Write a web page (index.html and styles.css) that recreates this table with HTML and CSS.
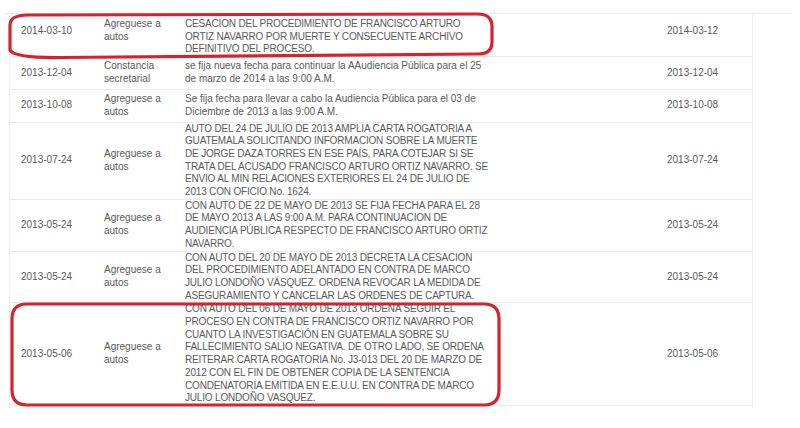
FILE: index.html
```html
<!DOCTYPE html>
<html>
<head>
    <title>Actuaciones</title>
    <link rel="stylesheet" href="styles.css">
</head>
<body>
    <div class="panel">
        <table class="actuaciones">
            <colgroup>
                <col class="c-fecha">
                <col class="c-tipo">
                <col class="c-desc">
                <col class="c-vacia">
                <col class="c-reg">
            </colgroup>
            <tbody>
                <tr class="first">
                    <td class="fecha">2014-03-10</td>
                    <td class="tipo">Agreguese a autos</td>
                    <td class="desc mayus">CESACION DEL PROCEDIMIENTO DE FRANCISCO ARTURO<br>ORTIZ NAVARRO POR MUERTE Y CONSECUENTE ARCHIVO<br>DEFINITIVO DEL PROCESO.</td>
                    <td></td>
                    <td class="reg">2014-03-12</td>
                </tr>
                <tr>
                    <td class="fecha">2013-12-04</td>
                    <td class="tipo">Constancia secretarial</td>
                    <td class="desc">se fija nueva fecha para continuar la AAudiencia Pública para el 25<br>de marzo de 2014 a las 9:00 A.M.</td>
                    <td></td>
                    <td class="reg">2013-12-04</td>
                </tr>
                <tr>
                    <td class="fecha">2013-10-08</td>
                    <td class="tipo">Agreguese a autos</td>
                    <td class="desc">Se fija fecha para llevar a cabo la Audiencia Pública para el 03 de<br>Diciembre de 2013 a las 9:00 A.M.</td>
                    <td></td>
                    <td class="reg">2013-10-08</td>
                </tr>
                <tr>
                    <td class="fecha">2013-07-24</td>
                    <td class="tipo">Agreguese a autos</td>
                    <td class="desc mayus">AUTO DEL 24 DE JULIO DE 2013 AMPLIA CARTA ROGATORIA A<br>GUATEMALA SOLICITANDO INFORMACION SOBRE LA MUERTE<br>DE JORGE DAZA TORRES EN ESE PAÍS, PARA COTEJAR SI SE<br>TRATA DEL ACUSADO FRANCISCO ARTURO ORTIZ NAVARRO. SE<br>ENVIO AL MIN RELACIONES EXTERIORES EL 24 DE JULIO DE<br>2013 CON OFICIO No. 1624.</td>
                    <td></td>
                    <td class="reg">2013-07-24</td>
                </tr>
                <tr>
                    <td class="fecha">2013-05-24</td>
                    <td class="tipo">Agreguese a autos</td>
                    <td class="desc mayus">CON AUTO DE 22 DE MAYO DE 2013 SE FIJA FECHA PARA EL 28<br>DE MAYO 2013 A LAS 9:00 A.M. PARA CONTINUACION DE<br>AUDIENCIA PÚBLICA RESPECTO DE FRANCISCO ARTURO ORTIZ<br>NAVARRO.</td>
                    <td></td>
                    <td class="reg">2013-05-24</td>
                </tr>
                <tr>
                    <td class="fecha">2013-05-24</td>
                    <td class="tipo">Agreguese a autos</td>
                    <td class="desc mayus">CON AUTO DEL 20 DE MAYO DE 2013 DECRETA LA CESACION<br>DEL PROCEDIMIENTO ADELANTADO EN CONTRA DE MARCO<br>JULIO LONDOÑO VÁSQUEZ. ORDENA REVOCAR LA MEDIDA DE<br>ASEGURAMIENTO Y CANCELAR LAS ORDENES DE CAPTURA.</td>
                    <td></td>
                    <td class="reg">2013-05-24</td>
                </tr>
                <tr>
                    <td class="fecha">2013-05-06</td>
                    <td class="tipo">Agreguese a autos</td>
                    <td class="desc mayus">CON AUTO DEL 06 DE MAYO DE 2013 ORDENA SEGUIR EL<br>PROCESO EN CONTRA DE FRANCISCO ORTIZ NAVARRO POR<br>CUANTO LA INVESTIGACIÓN EN GUATEMALA SOBRE SU<br>FALLECIMIENTO SALIO NEGATIVA. DE OTRO LADO, SE ORDENA<br>REITERAR CARTA ROGATORIA No. J3-013 DEL 20 DE MARZO DE<br>2012 CON EL FIN DE OBTENER COPIA DE LA SENTENCIA<br>CONDENATORIA EMITIDA EN E.E.U.U. EN CONTRA DE MARCO<br>JULIO LONDOÑO VASQUEZ.</td>
                    <td></td>
                    <td class="reg">2013-05-06</td>
                </tr>
                <tr>
                    <td class="fecha">2013-04-18</td>
                    <td class="tipo">Agreguese a autos</td>
                    <td class="desc mayus">SE FIJA NUEVA FECHA PARA AUDIENCIA PÚBLICA PARA EL 06<br>DE MAYO DE 2013.</td>
                    <td></td>
                    <td class="reg">2013-04-18</td>
                </tr>
            </tbody>
        </table>
    </div>

    <!-- marcas en rojo sobre la tabla -->
    <svg class="marks" width="800" height="428" viewBox="0 0 800 428">
        <path d="M 28 15 L 478 14 Q 492 14 492 27 L 492 42 Q 492 54 478 54 L 60 57.5 Q 14 58 10 50 L 10 25 Q 10 15 28 15 Z" />
        <path d="M 27 304 L 484 304 Q 499 304 499 319 L 499 390 Q 499 405 484 405 L 27 405 Q 12 405 12 390 L 12 319 Q 12 304 27 304 Z" />
    </svg>
</body>
</html>
```

FILE: styles.css
```css
body {
    margin: 0;
    background: #fff;
    font-family: 'Liberation Sans', Arial, sans-serif;
    font-size: 10px;
    color: #5a5a5a;
}

.panel {
    margin: 13px 0 0 5px;
    width: 787px;
    height: 394px;
    border-top: 1px solid #ececec;
    overflow: hidden;
}

.actuaciones {
    margin-left: 4px;
    width: 744px;
    table-layout: fixed;
    border-collapse: separate;
    border-spacing: 0;
    border-left: 1px solid #efefef;
    border-right: 1px solid #efefef;
}

.c-fecha { width: 86px; }
.c-tipo  { width: 81px; }
.c-desc  { width: 328px; }
.c-vacia { width: 150px; }
.c-reg   { width: 97px; }

.actuaciones td {
    padding: 9.5px 8px;
    line-height: 12.7px;
    vertical-align: middle;
    border-bottom: 1px solid #e9e9e9;
}

.actuaciones td.fecha {
    padding-left: 11px;
    padding-right: 5px;
}

.actuaciones td.tipo {
    padding-top: 3px;
    padding-bottom: 3px;
}

.actuaciones td.desc {
    padding: 0 8px;
    white-space: nowrap;
}

.actuaciones td.mayus {
    letter-spacing: -0.18px;
}

.actuaciones td.reg {
    padding-left: 12px;
    padding-right: 4px;
}

.first td,
.first td.tipo {
    padding-top: 2px;
    padding-bottom: 10px;
}

.first td.desc {
    padding-top: 4px;
    padding-bottom: 0;
}

.marks {
    position: absolute;
    top: 0;
    left: 0;
    pointer-events: none;
}

.marks path {
    fill: none;
    stroke: #d5222d;
    stroke-width: 3.2;
    stroke-linejoin: round;
}
```
